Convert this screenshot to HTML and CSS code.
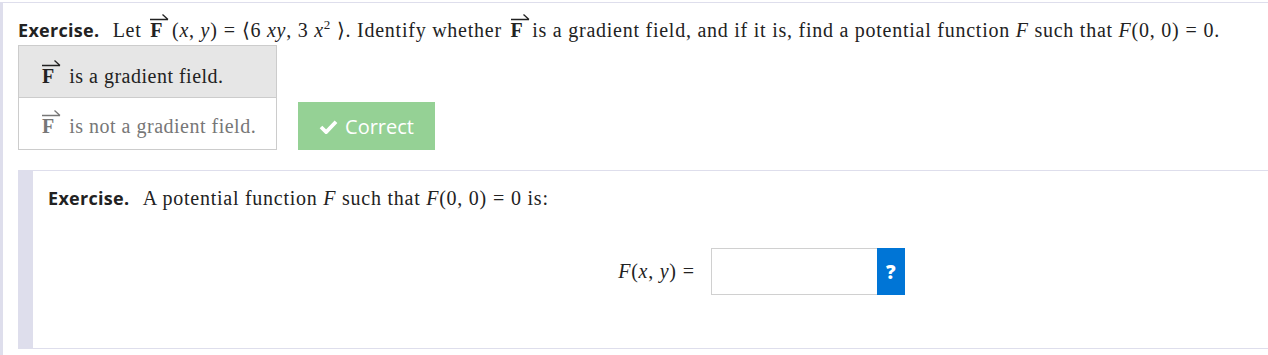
FILE: index.html
```html
<!DOCTYPE html>
<html lang="en">
<head>
    <meta charset="UTF-8">
    <title>Gradient Field Exercise</title>
    <link rel="stylesheet" href="styles.css">
</head>
<body>
    <div class="exercise">
        <p class="prompt">
            <span class="label">Exercise.</span>
            <span class="tex">Let <span class="vec">F<svg class="vec-arrow" viewBox="0 0 20 8"><path d="M1 6.5 H19 M19 6.5 L13.5 1.5"/></svg></span> <span class="paren">(</span><i>x</i>, <i>y</i>)<span class="rel">=</span>⟨6 <i>x</i><i>y</i>, 3 <i>x</i><sup>2</sup> ⟩. Identify whether <span class="vec">F<svg class="vec-arrow" viewBox="0 0 20 8"><path d="M1 6.5 H19 M19 6.5 L13.5 1.5"/></svg></span> is a gradient field, and if it is, find a potential function <i>F</i> such that <i>F</i>(0, 0)<span class="rel">=</span>0.</span>
        </p>

        <div class="answer-row">
            <ul class="choices">
                <li class="choice selected"><span class="vec">F<svg class="vec-arrow" viewBox="0 0 20 8"><path d="M1 6.5 H19 M19 6.5 L13.5 1.5"/></svg></span> is a gradient field.</li>
                <li class="choice"><span class="vec">F<svg class="vec-arrow" viewBox="0 0 20 8"><path d="M1 6.5 H19 M19 6.5 L13.5 1.5"/></svg></span> is not a gradient field.</li>
            </ul>
            <div class="feedback">
                <svg class="check" viewBox="0 0 20 16"><path d="M2 8.5 L7.5 14 L18 3"/></svg>
                Correct
            </div>
        </div>

        <div class="sub-exercise">
            <p class="prompt">
                <span class="label">Exercise.</span>
                <span class="tex">A potential function <i>F</i> such that <i>F</i>(0, 0)<span class="rel">=</span>0 is:</span>
            </p>
            <div class="input-row">
                <span class="tex"><i>F</i>(<i>x</i>, <i>y</i>)<span class="rel">=</span></span>
                <div class="answer-input">
                    <input type="text" class="answer-field">
                    <button class="help-btn">?</button>
                </div>
            </div>
        </div>
    </div>
</body>
</html>
```

FILE: styles.css
```css
:root {
    --edge: #dedeec;
    --text: #222;
    --green: #95d195;
    --blue: #0075d6;
}
* {
    box-sizing: border-box;
    margin: 0;
    padding: 0;
}

body {
    background: #fff;
    color: var(--text);
    font-family: 'Open Sans', sans-serif;
}
.exercise {
    margin-top: 2px;
    border-left: 3px solid var(--edge);
    border-top: 1px solid var(--edge);
    padding-top: 14px;
    height: 353px;
}
.prompt {
    padding-left: 15px;
    line-height: 26px;
}
.label {
    font-weight: 700;
    font-size: 18px;
    letter-spacing: 0.3px;
    margin-right: 9px;
}
.tex {
    font-family: 'Liberation Serif', serif;
    font-size: 20px;
    letter-spacing: 0.75px;
}
.tex i {
    font-style: italic;
}
.tex sup {
    font-size: 13px;
    line-height: 0;
}
.tex .vec {
    margin: 0 3px;
}
.rel {
    margin: 0 6px;
}
.vec {
    position: relative;
    display: inline-block;
    line-height: 1;
    font-family: 'Liberation Serif', serif;
    font-weight: 700;
    font-size: 20px;
}
.vec-arrow {
    position: absolute;
    left: -1px;
    top: -7px;
    width: 20px;
    height: 8px;
    fill: none;
    stroke: currentColor;
    stroke-width: 1.3;
}
.answer-row {
    display: flex;
    align-items: flex-end;
    gap: 21px;
    margin: 1px 0 0 15px;
}
.choices {
    list-style: none;
    width: 259px;
    border: 1px solid #ccc;
}
.choice {
    font-family: 'Liberation Serif', serif;
    font-size: 20px;
    letter-spacing: 0.5px;
    padding-left: 23px;
    height: 51px;
    line-height: 56px;
    color: #777;
    background: #fff;
}
.choice .vec {
    margin-right: 9px;
}
.choice.selected {
    background: #e6e6e6;
    color: var(--text);
    height: 52px;
    line-height: 60px;
    border-bottom: 1px solid #ccc;
}
.feedback {
    width: 137px;
    height: 48px;
    background: var(--green);
    color: #fff;
    font-size: 20px;
    display: flex;
    align-items: center;
    justify-content: center;
    gap: 7px;
}
.check {
    width: 19px;
    height: 15px;
    fill: none;
    stroke: #fff;
    stroke-width: 4;
}
.sub-exercise {
    margin: 20px 0 0 15px;
    border-left: 15px solid var(--edge);
    border-top: 1px solid var(--edge);
    border-bottom: 1px solid var(--edge);
    height: 179px;
    padding-top: 14px;
}
.input-row {
    display: flex;
    align-items: center;
    justify-content: center;
    gap: 16px;
    margin-top: 36px;
    padding-left: 222px;
}
.input-row .rel {
    margin-right: 0;
}
.answer-input {
    display: flex;
}
.answer-field {
    width: 166px;
    height: 47px;
    border: 1px solid #d0d0d0;
    border-right: none;
    outline: none;
}
.help-btn {
    width: 28px;
    height: 47px;
    border: none;
    background: var(--blue);
    color: #fff;
    font-family: 'Open Sans', sans-serif;
    font-weight: 800;
    font-size: 19px;
}
```
